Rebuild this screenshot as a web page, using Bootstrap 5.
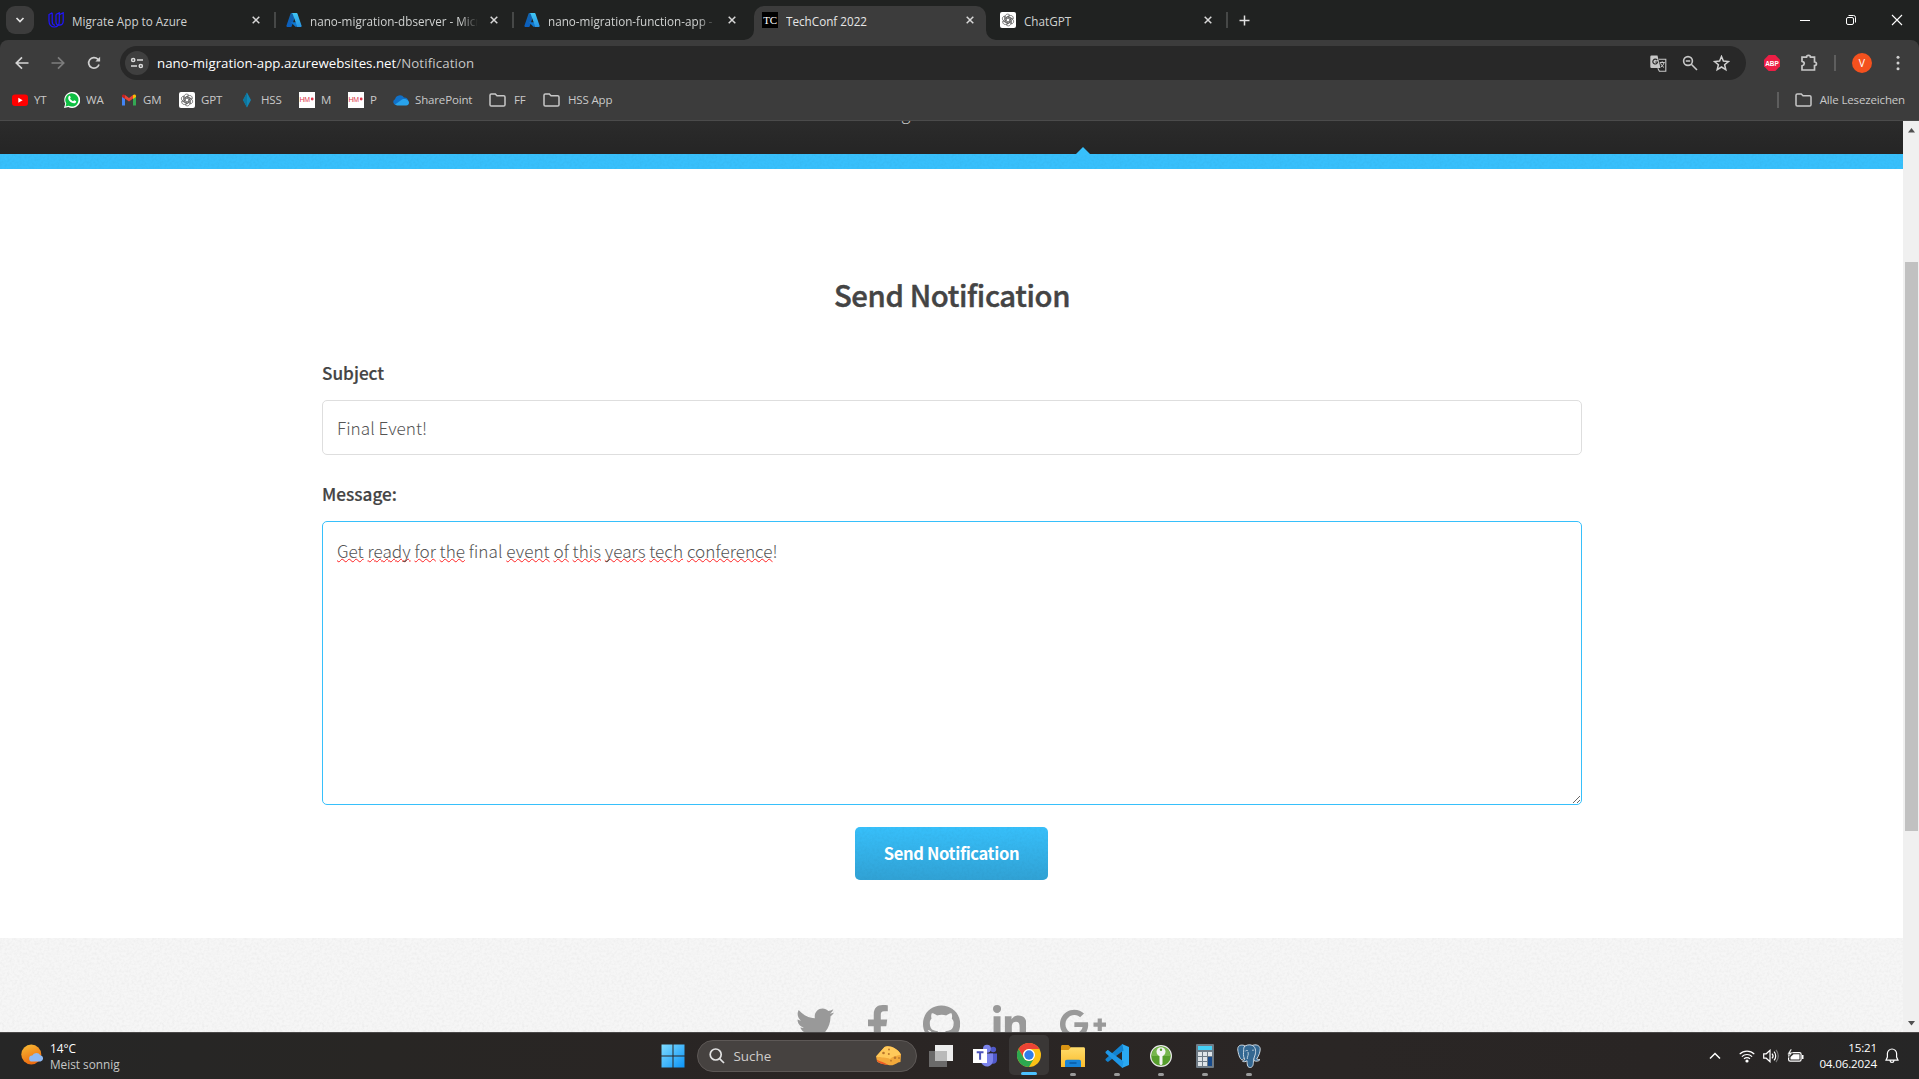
<!DOCTYPE html>
<html lang="de">
<head>
<meta charset="utf-8">
<meta name="viewport" content="width=device-width, initial-scale=1">
<title>TechConf 2022</title>
<link href="https://cdn.jsdelivr.net/npm/bootstrap@5.3.0/dist/css/bootstrap.min.css" rel="stylesheet">
<style>
  html, body { height: 100%; overflow: hidden; }
  body { font-family: "Open Sans", "Noto Sans", sans-serif; font-size: 11.5px; line-height: 16px; color: #e3e3e3; background: #fff; }
  svg { display: block; flex: none; }

  /* browser tabs */
  .tabstrip { height: 40px; background: #202221; padding-left: 6px; }
  .tab-search { width: 28px; height: 28px; border-radius: 9px; background: #3c3c3c; margin: 6px 4px 0 0; }
  .browser-tab { width: 238px; padding: 0 16px 0 10px; height: 40px; color: #d0d2d1; position: relative; }
  .tab-title { width: 170px; margin-left: 8px; padding-top: 1px; overflow: hidden; white-space: nowrap; font-size: 11.7px; }
  .tab-title.fades { -webkit-mask-image: linear-gradient(90deg, #000 150px, transparent 168px); mask-image: linear-gradient(90deg, #000 150px, transparent 168px); }
  .tab-line::after { content: ""; position: absolute; right: 0; top: 12px; width: 2px; height: 16px; background: #464847; }
  .browser-tab.current { color: #e6e6e6; }
  .browser-tab.current::before { content: ""; position: absolute; z-index: 0; left: 2px; right: 4px; top: 6px; bottom: 0; background: #3c3c3c; border-radius: 10px 10px 0 0; }
  .browser-tab.current > * { position: relative; z-index: 1; }
  .tab-foot { position: absolute !important; bottom: 0; }
  .tab-foot.l { left: -8px; } .tab-foot.r { right: -6px; }
  .tc-icon { width: 16px; height: 16px; background: #000; color: #fff; font: 11px/16px "Liberation Serif", serif; letter-spacing: -.3px; text-align: center; }
  .new-tab { margin-left: 11px; }
  .win-buttons { gap: 34px; padding-right: 16px; height: 40px; }

  /* toolbar */
  .toolbar-wrap { background: #202221; }
  .toolbar { height: 46px; background: #3c3c3c; padding: 0 19px 0 14px; border-radius: 8px 8px 0 0; }
  .gap-20 { margin-left: 20px; }
  .omnibox { height: 34px; border-radius: 17px; background: #282828; margin-left: 18px; width: 1626px; padding: 0 16px 0 5px; }
  .gap-15 { margin-left: 15px; }
  .gap-16 { margin-left: 16px; }
  .gap-18 { margin-left: 18px; }
  .site-info { width: 24px; height: 24px; border-radius: 50%; background: #3f3f3f; }
  .address { font-size: 13.25px; line-height: 18px; margin-left: 8px; color: #fff; }
  .address span { color: #c7c7c7; letter-spacing: .12px; }
  .avatar { width: 20px; height: 20px; border-radius: 50%; background: #f4511e; color: #fff; font-size: 10.5px; line-height: 20px; text-align: center; }
  .thin-bar { width: 2px; height: 16px; background: #5e5e5e; }

  /* bookmarks */
  .bookmarks { height: 35px; background: #3c3c3c; border-bottom: 1px solid #4b4b4b; padding: 0 14px 6px 12px; color: #c9c9c9; }
  .bookmark { display: flex; align-items: center; white-space: nowrap; letter-spacing: -.15px; }
  .bookmark svg { margin-right: 6px; }
  .bookmark .folder { margin-right: 8px; }

  /* page */
  .viewport { height: 911px; background: #fff; }
  .site, .site .form-control, .site .btn { font-family: "Noto Sans CJK SC", "Noto Sans CJK JP", sans-serif; }
  .site { width: 1903px; color: #444; }
  .site-header { height: 33px; position: relative; overflow: hidden; background: linear-gradient(#2b2b2b, #252525); }
  .nav-rest { position: absolute; left: 901px; top: -18px; font-size: 17px; line-height: 20px; color: #c0c0c0; font-weight: 300; }
  .nav-notch { position: absolute; left: 1076px; bottom: 0; border: 7px solid transparent; border-top: 0; border-bottom-color: #37c0fb; }
  .grain { background-image: url("data:image/svg+xml,%3Csvg xmlns='http://www.w3.org/2000/svg' width='160' height='160'%3E%3Cfilter id='n'%3E%3CfeTurbulence type='fractalNoise' baseFrequency='.4' numOctaves='2' stitchTiles='stitch'/%3E%3CfeColorMatrix values='0 0 0 0 0 0 0 0 0 0 0 0 0 0 0 .5 0 0 0 -.2'/%3E%3C/filter%3E%3Crect width='160' height='160' filter='url(%23n)' opacity='.13'/%3E%3C/svg%3E"); }
  .blue-bar { height: 15px; background-color: #38c0fc; }
  .panel { height: 769px; width: 1260px; margin-left: 322px; padding-top: 103px; }
  .panel h2 { font-size: 29.3px; line-height: 44px; font-weight: 500; color: #444; text-align: center; margin: 0 0 45px; letter-spacing: -.38px; -webkit-text-stroke: .45px #444; }
  .panel label { display: block; font-size: 17.2px; line-height: 24px; font-weight: 500; color: #444; margin-bottom: 15px; -webkit-text-stroke: .2px #444; }
  .panel .form-control { font-size: 17.2px; line-height: 26px; font-weight: 300; color: #555; border: 1px solid #dedede; border-radius: 5px; padding: 16px 14px 14px; box-shadow: none; }
  .panel .subject { height: 55px; padding: 14px; margin-bottom: 27px; }
  .panel .message { height: 284px; border-color: #37c0fb; overflow: auto; resize: both; }
  .typo { text-decoration: underline wavy #f22 1.200px; text-underline-offset: 0; text-decoration-skip-ink: none; }
  .panel .send { display: block; width: 193px; height: 53px; margin: 22px 0 0 533px; padding: 0; border: 0; border-radius: 5px; color: #fff; font-size: 16.6px; font-weight: 700; letter-spacing: -.38px; background-color: #37c0fb; }
  .send-face { display: flex; height: 100%; align-items: center; justify-content: center; border-radius: 5px; background: linear-gradient(rgba(30,80,110,0), rgba(30,80,110,.27)); }
  .site-footer { height: 94px; background-color: #f6f6f6; padding-top: 67px; overflow: hidden; gap: 33px; fill: #999; }
  .fb { margin: 0 1.5px; }

  .scroll-track { width: 16px; background: #f0f0f0; padding: 7px 1px 6px 2px; }
  .scroll-thumb { height: 569px; margin-top: 129px; width: 13px; background: #c1c1c1; }

  /* taskbar */
  .taskbar { height: 47px; border-top: 1px solid #4a4848; background: linear-gradient(90deg, #262626, #282624 20%, #2a2524 45%, #2a2625 70%, #292524 86%, #262626); position: relative; }
  .weather { position: absolute; left: 21px; top: 7px; line-height: 16px; gap: 7px; font-size: 11.8px; color: #c6c6c6; }
  .weather svg { margin-bottom: 2px; }
  .task-items { position: absolute; left: 650.5px; top: 2px; }
  .task-slot { width: 44px; height: 41px; position: relative; }
  .search-pill { width: 220px; height: 32px; border-radius: 16px; border: 1px solid #5d5856; background: #464240; margin: 0 2px; padding: 0 14px 0 11px; color: #cfcdcb; font-size: 13.4px; gap: 9px; }
  .task-slot.running::after { content: ""; position: absolute; left: 19px; bottom: 0; width: 6px; height: 3px; border-radius: 2px; background: #9a9a9a; }
  .task-slot.active { background: #3a3736; border-radius: 5px; width: 40px; height: 40px; margin: 0 2px 1px; }
  .task-slot.active::after { left: 12px; bottom: 0; width: 16px; background: #4cc2ff; }
  .tray { position: absolute; right: 20px; top: 3px; height: 40px; color: #fff; }
  .clock { font-size: 11.6px; line-height: 16px; text-align: right; width: 67px; white-space: nowrap; letter-spacing: -.15px; margin-left: 6px; }
</style>
</head>
<body>
<svg width="0" height="0" class="position-absolute" aria-hidden="true">
  <defs>
    <linearGradient id="az1" x1="0" y1="0" x2="0" y2="1"><stop offset="0" stop-color="#1463a8"/><stop offset="1" stop-color="#0a5fc0"/></linearGradient>
    <linearGradient id="az2" x1="0" y1="0" x2="0" y2="1"><stop offset="0" stop-color="#40c8f6"/><stop offset="1" stop-color="#2893e2"/></linearGradient>
    <linearGradient id="winlogo" x1="0" y1="0" x2="1" y2="1"><stop offset="0" stop-color="#7fdcff"/><stop offset="1" stop-color="#0b93f6"/></linearGradient>
    <linearGradient id="sun" x1="0" y1="0" x2=".4" y2="1"><stop offset="0" stop-color="#f8be36"/><stop offset="1" stop-color="#ee6c10"/></linearGradient>
    <linearGradient id="folderg" x1="0" y1="0" x2="0" y2="1"><stop offset="0" stop-color="#ffdc6b"/><stop offset="1" stop-color="#fbbc2c"/></linearGradient>
    <symbol id="azure" viewBox="0 0 16 16"><path d="M5.4 1h4.8L5.7 14.2a.9.9 0 0 1-.9.7H1.4a.9.9 0 0 1-.9-1.3L4.5 1.7A1 1 0 0 1 5.4 1z" fill="url(#az1)"/><path d="M12 10.2H5l4.4 4.6h3.5z" fill="#0f78d0"/><path d="M10.6 1H5.8l.8.8 4.4 12.3c.1.4 0 .8-.3.9h4a.9.9 0 0 0 .9-1.3L11.500 1.700A1 1 0 0 0 10.600 1z" fill="url(#az2)"/></symbol>
    <symbol id="closex" viewBox="0 0 8 8"><path d="M.7.7l6.600 6.600M7.300.7L.7 7.300" stroke="#d8d8d8" stroke-width="1.500" fill="none"/></symbol>
    <symbol id="gpt" viewBox="0 0 16 16"><rect width="16" height="16" rx="2" fill="#fff"/><g fill="none" stroke="#4a4a4a" stroke-width=".65"><path id="petal" d="M5.200 9.500V4.800c0-1.700 1.100-2.700 2.500-2.700 1 0 1.700.5 2.100 1.100L6.300 5.200v4.200"/><use href="#petal" transform="rotate(60 8 8)"/><use href="#petal" transform="rotate(120 8 8)"/><use href="#petal" transform="rotate(180 8 8)"/><use href="#petal" transform="rotate(240 8 8)"/><use href="#petal" transform="rotate(300 8 8)"/></g></symbol>
    <symbol id="hm" viewBox="0 0 16 16"><rect width="16" height="16" fill="#fff"/><text x=".5" y="10.200" font-size="6.300" textLength="10.500" lengthAdjust="spacingAndGlyphs" fill="#e0384c" font-family="Liberation Sans, sans-serif">HM</text><circle cx="13.200" cy="7" r="1.400" fill="#e0384c"/></symbol>
    <symbol id="folder" viewBox="0 0 17 14"><path d="M1 2.300C1 1.500 1.500 1 2.300 1h4L8 2.800h6.700c.8 0 1.300.5 1.300 1.300v7.600c0 .8-.5 1.300-1.300 1.300H2.300C1.500 13 1 12.500 1 11.700z" fill="none" stroke="#c7c7c7" stroke-width="1.500"/></symbol>
  </defs>
</svg>

<header>
  <div class="tabstrip d-flex">
    <div class="tab-search d-flex align-items-center justify-content-center"><svg width="10" height="8" viewBox="0 0 10 8"><path d="M1.500 2L5 5.500 8.500 2" fill="none" stroke="#e3e3e3" stroke-width="1.700"/></svg></div>
    <div class="browser-tab tab-line d-flex align-items-center">
      <svg width="16" height="16" viewBox="0 0 16 16"><path d="M4.200.8L1 2.500v6.600c0 3.400 2.100 5.900 5.200 5.900 3 0 5.100-2.100 5.100-5.400M4.200.8v8.800c0 2 1 3.400 2.700 3.700M8 2.500L11.300.8v8.800M8 2.500v7.200c0 2.100 1.200 3.500 3.300 3.500 2.300 0 3.900-1.600 3.900-4.200V.8L11.300 2.800" fill="none" stroke="#2015ff" stroke-width="1.200"/></svg>
      <span class="tab-title">Migrate App to Azure</span><svg class="ms-auto" width="8" height="8"><use href="#closex"/></svg>
    </div>
    <div class="browser-tab tab-line d-flex align-items-center"><svg width="16" height="16"><use href="#azure"/></svg><span class="tab-title fades">nano-migration-dbserver - Micr</span><svg class="ms-auto" width="8" height="8"><use href="#closex"/></svg></div>
    <div class="browser-tab d-flex align-items-center"><svg width="16" height="16"><use href="#azure"/></svg><span class="tab-title fades">nano-migration-function-app -</span><svg class="ms-auto" width="8" height="8"><use href="#closex"/></svg></div>
    <div class="browser-tab current d-flex align-items-center">
      <svg class="tab-foot l" width="10" height="10"><path d="M0 10A10 10 0 0 0 10 0V10z" fill="#3c3c3c"/></svg>
      <div class="tc-icon">TC</div><span class="tab-title">TechConf 2022</span><svg class="ms-auto" width="8" height="8"><use href="#closex"/></svg>
      <svg class="tab-foot r" width="10" height="10"><path d="M10 10A10 10 0 0 1 0 0V10z" fill="#3c3c3c"/></svg>
    </div>
    <div class="browser-tab tab-line d-flex align-items-center"><svg width="16" height="16"><use href="#gpt"/></svg><span class="tab-title">ChatGPT</span><svg class="ms-auto" width="8" height="8"><use href="#closex"/></svg></div>
    <svg class="new-tab align-self-center" width="11" height="11" viewBox="0 0 11 11"><path d="M5.500.5v10M.5 5.500h10" stroke="#e0e0e0" stroke-width="1.500"/></svg>
    <div class="win-buttons d-flex align-items-center ms-auto">
      <svg width="12" height="12" viewBox="0 0 12 12"><path d="M1 6.500h10" stroke="#fff"/></svg>
      <svg width="12" height="12" viewBox="0 0 12 12"><g fill="none" stroke="#fff"><rect x="1.500" y="3.500" width="7" height="7" rx="1.500"/><path d="M3.500 1.500h5a2 2 0 0 1 2 2v5"/></g></svg>
      <svg width="12" height="12" viewBox="0 0 12 12"><path d="M1 1l10 10M11 1L1 11" stroke="#fff" stroke-width="1.100"/></svg>
    </div>
  </div>
  <div class="toolbar-wrap">
    <div class="toolbar d-flex align-items-center">
      <svg width="16" height="16" viewBox="0 0 16 16"><path d="M14.500 8H2.500M8 2.300L2.300 8 8 13.700" fill="none" stroke="#d5d5d5" stroke-width="1.700"/></svg>
      <svg class="gap-20" width="16" height="16" viewBox="0 0 16 16"><path d="M1.500 8h12M8 2.300L13.700 8 8 13.700" fill="none" stroke="#7d7d7d" stroke-width="1.700"/></svg>
      <svg class="gap-20" width="16" height="16" viewBox="0 0 16 16"><path d="M13 9.500A5.300 5.300 0 1 1 11.800 4.200L13.300 5.700" fill="none" stroke="#d0d0d0" stroke-width="1.700"/><path d="M14.100 1.800v4.700H9.400z" fill="#d0d0d0"/></svg>
      <div class="omnibox d-flex align-items-center">
        <div class="site-info d-flex align-items-center justify-content-center"><svg width="14" height="12" viewBox="0 0 14 12"><g fill="none" stroke="#dcdcdc" stroke-width="1.500"><circle cx="3.200" cy="3" r="1.600"/><path d="M7 3h6M1 9h6"/><circle cx="10.800" cy="9" r="1.600"/></g></svg></div>
        <div class="address">nano-migration-app.azurewebsites.net<span>/Notification</span></div>
        <svg class="ms-auto" width="17" height="17" viewBox="0 0 17 17"><path d="M1.500.5h6l3 12.500h-9A1.200 1.200 0 0 1 .3 11.800V1.700A1.200 1.200 0 0 1 1.500.5z" fill="#c7c7c7"/><path d="M7.200 5.200A2.400 2.400 0 1 0 7.600 7H5.300" fill="none" stroke="#282828" stroke-width="1.200"/><path d="M9 4.200h6.800v12H9.400L7.800 13.300" fill="none" stroke="#c7c7c7" stroke-width="1.100"/><path d="M9.800 7.500h5M12.200 6.300v1.200M10.500 8.200c.7 1.900 2 3.300 3.500 4.300M14 7.700c-.5 2-1.600 3.300-3 4.300" fill="none" stroke="#c7c7c7"/></svg>
        <svg class="gap-15" width="16" height="16" viewBox="0 0 16 16"><g fill="none" stroke="#c7c7c7" stroke-width="1.600"><circle cx="6" cy="6" r="4.400"/><path d="M9.300 9.300L15 15M3.800 6h4.400"/></g></svg>
        <svg class="gap-15" width="17" height="17" viewBox="0 0 17 17"><path d="M8.500 1.500l1.900 4.600 5 .4-3.800 3.200 1.200 4.900-4.300-2.600-4.300 2.600 1.200-4.900L1.600 6.500l5-.4z" fill="none" stroke="#d0d0d0" stroke-width="1.500"/></svg>
      </div>
      <svg class="gap-18" width="16" height="16" viewBox="0 0 16 16"><path d="M4.700 0h6.600L16 4.700v6.600L11.300 16H4.700L0 11.300V4.700z" fill="#ed1e45"/><text x="1.200" y="10.800" font-size="7.800" font-weight="700" fill="#fff" textLength="13.600" lengthAdjust="spacingAndGlyphs" font-family="Liberation Sans, sans-serif">ABP</text></svg>
      <svg class="gap-20" width="18" height="18" viewBox="0 0 18 18"><path d="M2 3.200h4.500C6.500.8 10.500.8 10.500 3.200H14.500V8c2.600 0 2.600 3.600 0 3.600V16H2v-4.200C5 11 5 8 2 7.300z" fill="none" stroke="#c7c7c7" stroke-width="1.700"/></svg>
      <div class="thin-bar gap-16"></div>
      <div class="avatar gap-16">V</div>
      <svg class="ms-auto" width="4" height="16" viewBox="0 0 4 16"><g fill="#d0d0d0"><circle cx="2" cy="2.300" r="1.500"/><circle cx="2" cy="8" r="1.500"/><circle cx="2" cy="13.700" r="1.500"/></g></svg>
    </div>
  </div>
  <div class="bookmarks d-flex align-items-center">
    <div class="bookmark" style="width:52px"><svg width="16" height="16" viewBox="0 0 16 16"><rect y="2.500" width="16" height="11.500" rx="3" fill="#f00"/><path d="M6.300 5.700v5l4.300-2.500z" fill="#fff"/></svg>YT</div>
    <div class="bookmark" style="width:57px"><svg width="16" height="16" viewBox="0 0 16 16"><path d="M0 16l1.200-4.300A8 8 0 1 1 4.300 14.900z" fill="#fff"/><path d="M1.500 14.500l.8-3A6.600 6.600 0 1 1 4.600 13.700z" fill="#0fbf43"/><path d="M4.900 4c.8-.8 1.300-.2 1.800 1.300.1.500-.6 1-.6 1.300.7 1.300 1.600 2.100 2.900 2.600.5 0 .9-1 1.300-.9 1.500.6 2.100 1 1.800 1.700-.6 1.700-2.500 1.700-4.700.6C5 9.300 3.200 6.500 4.900 4z" fill="#fff"/></svg>WA</div>
    <div class="bookmark" style="width:58px"><svg width="16" height="16" viewBox="0 0 16 16"><path d="M1 13.500h3V6L1 3.800z" fill="#4285f4"/><path d="M12 13.500h3V3.800L12 6z" fill="#34a853"/><path d="M4 6.500V3l4 3 4-3v3.500l-4 3z" fill="#ea4335"/><path d="M1 5V4c0-1.700 1.700-2.100 3-1v4z" fill="#c5221f"/><path d="M15 5V4c0-1.700-1.700-2.100-3-1v4z" fill="#fbbc04"/></svg>GM</div>
    <div class="bookmark" style="width:60px"><svg width="16" height="16"><use href="#gpt"/></svg>GPT</div>
    <div class="bookmark" style="width:60px"><svg width="16" height="16" viewBox="0 0 16 16"><path d="M8 .5L12 8 8 15.500 4 8z" fill="#1387b5"/><path d="M8 .5V15.500L4 8z" fill="#0c779f"/></svg>HSS</div>
    <div class="bookmark" style="width:49px"><svg width="16" height="16"><use href="#hm"/></svg>M</div>
    <div class="bookmark" style="width:45px"><svg width="16" height="16"><use href="#hm"/></svg>P</div>
    <div class="bookmark" style="width:96px"><svg width="16" height="16" viewBox="0 0 16 16"><path d="M3 13a3 3 0 0 1-1-5.700A5 5 0 0 1 11 5.400 4 4 0 0 1 13 13z" fill="#1071c8"/><path d="M2 12.500L9 7.500c3-1.500 7 .6 7 3.200 0 1.600-1.200 2.800-2.800 2.800H4z" fill="#28a3ec"/></svg>SharePoint</div>
    <div class="bookmark" style="width:54px"><svg class="folder" width="17" height="14"><use href="#folder"/></svg>FF</div>
    <div class="bookmark"><svg class="folder" width="17" height="14"><use href="#folder"/></svg>HSS App</div>
    <div class="thin-bar ms-auto"></div>
    <div class="bookmark gap-16"><svg class="folder" width="17" height="14"><use href="#folder"/></svg>Alle Lesezeichen</div>
  </div>
</header>

<main class="viewport d-flex">
  <div class="site">
    <div class="site-header"><span class="nav-rest">g</span><span class="nav-notch"></span></div>
    <div class="blue-bar grain"></div>
    <section class="panel">
      <h2>Send Notification</h2>
      <label for="subject">Subject</label>
      <input id="subject" class="form-control subject" type="text" value="Final Event!" spellcheck="false">
      <label id="msg">Message:</label>
      <div class="form-control message" role="textbox" aria-labelledby="msg"><span class="typo">Get</span> <span class="typo">ready</span> <span class="typo">for</span> <span class="typo">the</span> final <span class="typo">event</span> <span class="typo">of</span> <span class="typo">this</span> <span class="typo">years</span> <span class="typo">tech</span> <span class="typo">conference</span>!</div>
      <button class="btn send grain" type="button"><span class="send-face">Send Notification</span></button>
    </section>
    <footer class="site-footer grain d-flex justify-content-center align-items-start">
      <svg width="38.400" height="38.400" viewBox="0 0 512 512"><path d="M459.370 151.716c.325 4.548.325 9.097.325 13.645 0 138.720-105.583 298.558-298.558 298.558-59.452 0-114.680-17.219-161.137-47.106 8.447.974 16.568 1.299 25.340 1.299 49.055 0 94.213-16.568 130.274-44.832-46.132-.975-84.792-31.188-98.112-72.772 6.498.974 12.995 1.624 19.818 1.624 9.421 0 18.843-1.300 27.614-3.573-48.081-9.747-84.143-51.980-84.143-102.985v-1.299c13.969 7.797 30.214 12.670 47.431 13.319-28.264-18.843-46.781-51.005-46.781-87.391 0-19.492 5.197-37.360 14.294-52.954 51.655 63.675 129.300 105.258 216.365 109.807-1.624-7.797-2.599-15.918-2.599-24.040 0-57.828 46.782-104.934 104.934-104.934 30.213 0 57.502 12.670 76.670 33.137 23.715-4.548 46.456-13.320 66.599-25.340-7.798 24.366-24.366 44.833-46.132 57.827 21.117-2.273 41.584-8.122 60.426-16.243-14.292 20.791-32.161 39.308-52.628 54.253z"/></svg>
      <svg class="fb" width="19.800" height="38.400" viewBox="0 0 264 512"><path d="M76.700 512V283H0v-91h76.700v-71.700C76.700 42.400 124.300 0 193.800 0c33.300 0 61.900 2.500 70.200 3.600V85h-48.200c-37.800 0-45.100 18-45.100 44.300V192H256l-11.700 91h-73.600v229"/></svg>
      <svg width="37.200" height="38.400" viewBox="0 0 496 512"><path d="M244.800 8C106.100 8 0 113.300 0 252c0 110.900 69.800 205.800 169.500 239.200 12.800 2.300 17.300-5.600 17.300-12.100 0-6.200-.3-40.400-.3-61.400 0 0-70 15-84.700-29.800 0 0-11.400-29.100-27.800-36.600 0 0-22.900-15.700 1.600-15.400 0 0 24.900 2 38.600 25.800 21.900 38.600 58.600 27.500 72.900 20.900 2.300-16 8.800-27.100 16-33.700-55.900-6.200-112.300-14.300-112.300-110.500 0-27.500 7.600-41.300 23.600-58.900-2.600-6.500-11.100-33.300 2.600-67.900 20.900-6.500 69 27 69 27 20-5.600 41.500-8.500 62.800-8.500s42.800 2.900 62.800 8.500c0 0 48.100-33.600 69-27 13.700 34.700 5.200 61.400 2.600 67.900 16 17.700 25.800 31.500 25.800 58.900 0 96.500-58.900 104.200-114.800 110.500 9.200 7.900 17 22.900 17 46.400 0 33.700-.3 75.400-.3 83.600 0 6.500 4.600 14.400 17.300 12.100C428.200 457.800 496 362.900 496 252 496 113.300 383.500 8 244.800 8z"/></svg>
      <svg width="33.600" height="38.400" viewBox="0 0 448 512"><path d="M100.280 448H7.400V148.900h92.880zM53.790 108.100C24.090 108.100 0 83.500 0 53.800a53.790 53.790 0 0 1 107.580 0c0 29.700-24.100 54.300-53.790 54.300zM447.900 448h-92.680V302.400c0-34.700-.7-79.200-48.290-79.200-48.290 0-55.690 37.700-55.690 76.700V448h-92.780V148.900h89.080v40.800h1.300c12.400-23.500 42.690-48.300 87.880-48.300 94 0 111.280 61.900 111.280 142.300V448z"/></svg>
      <svg width="48" height="38.400" viewBox="0 0 640 512"><path d="M386.061 228.496c1.834 9.692 3.143 19.384 3.143 31.956C389.204 370.205 315.599 448 204.800 448c-106.084 0-192-85.915-192-192s85.916-192 192-192c51.864 0 95.083 18.859 128.611 50.292l-52.126 50.030c-14.145-13.621-39.028-29.599-76.485-29.599-65.484 0-118.920 54.221-118.920 121.277 0 67.056 53.436 121.277 118.920 121.277 75.961 0 104.513-54.745 108.965-82.773H204.800v-66.009h181.261zm185.406 6.437V179.200h-56.001v55.733h-55.733v56.001h55.733v55.733h56.001v-55.733H627.200v-56.001h-55.733z"/></svg>
    </footer>
  </div>
  <div class="scroll-track d-flex flex-column align-items-center">
    <svg width="7" height="5" viewBox="0 0 7 5"><path d="M3.500 0L7 4.500H0z" fill="#505050"/></svg>
    <div class="scroll-thumb"></div>
    <svg class="mt-auto" width="7" height="5" viewBox="0 0 7 5"><path d="M3.500 4.500L7 0H0z" fill="#505050"/></svg>
  </div>
</main>

<footer class="taskbar">
  <div class="weather d-flex align-items-center">
    <svg width="22" height="22" viewBox="0 0 22 22"><circle cx="10.300" cy="10.500" r="10" fill="url(#sun)"/><path d="M11 17.500a3 3 0 0 1 .3-6 4.500 4.500 0 0 1 8-.3 3.200 3.200 0 0 1 .2 6.300z" fill="#8fbaf5"/></svg>
    <div><div class="text-white">14°C</div><div>Meist sonnig</div></div>
  </div>
  <div class="task-items d-flex align-items-center">
    <div class="task-slot d-flex align-items-center justify-content-center"><svg width="24" height="24" viewBox="0 0 24 24"><path d="M.5.5h11v11H.5zM12.500.5h11v11h-11zM.5 12.500h11v11H.5zM12.500 12.500h11v11h-11z" fill="url(#winlogo)"/></svg></div>
    <div class="search-pill d-flex align-items-center">
      <svg width="16" height="16" viewBox="0 0 16 16"><g fill="none" stroke="#e2e2e2" stroke-width="1.700"><circle cx="6.700" cy="6.500" r="5.500"/><path d="M10.600 10.600L15 15"/></g></svg>
      <span>Suche</span>
      <svg class="ms-auto" width="27" height="22" viewBox="0 0 27 22"><path d="M1 11.500L9.500 2c4-2.500 13 1 16.500 7.500L25.500 17c-4 .2-5.500 4-11 3.200C9 19 4 18.500 2.200 16.500z" fill="#f2a93b"/><path d="M1 11.500L9.500 2c4-2.500 13 1 16.500 7.500-4 1.500-7 1-11 4.500-4-2.200-8-.6-14-2.500z" fill="#ffc95a"/><path d="M1.500 14.500c4 2.300 8 2.800 11.500 5.500-5-.6-9-1.500-11-4z" fill="#ee5a24"/><g fill="#b9762c"><circle cx="8.500" cy="8" r="1.300"/><circle cx="14" cy="4.500" r="1"/><circle cx="13.800" cy="9" r="1"/><circle cx="20" cy="12.700" r="1.300"/><circle cx="16" cy="15.700" r=".9"/><circle cx="24" cy="13" r=".9"/></g></svg>
    </div>
    <div class="task-slot d-flex align-items-center justify-content-center"><svg width="24" height="22" viewBox="0 0 24 22"><path d="M6 0h18v16H6z" fill="#ededed"/><path d="M0 6h18v16H0z" fill="#777" opacity=".85"/><path d="M6 6h12v10H6z" fill="#b9b9b9"/></svg></div>
    <div class="task-slot d-flex align-items-center justify-content-center"><svg width="24" height="24" viewBox="0 0 24 24"><circle cx="20.300" cy="5.500" r="2.800" fill="#5059c9"/><path d="M17 9.500h7v6.500c0 4-5 5-7 2z" fill="#5059c9"/><circle cx="14" cy="4.800" r="4" fill="#7b83eb"/><path d="M8 9.500h12V16c0 8-10 8.500-12 2z" fill="#7b83eb"/><rect y="5" width="14" height="14" fill="#fff"/><path d="M3.700 8.300h6.800M7.100 8.300v7.500" stroke="#4b53bc" stroke-width="2"/></svg></div>
    <div class="task-slot running active d-flex align-items-center justify-content-center"><svg width="24" height="24" viewBox="0 0 24 24"><circle cx="12" cy="12" r="12" fill="#fbc116"/><path d="M1.600 6A12 12 0 0 1 22.400 6H12a6 6 0 0 0-5.200 9z" fill="#ea4335"/><path d="M1.600 6A12 12 0 0 0 12 24L17.200 15A6 6 0 0 1 6.800 15z" fill="#2da94f"/><circle cx="12" cy="12" r="6" fill="#fff"/><circle cx="12" cy="12" r="4.700" fill="#2f7de9"/></svg></div>
    <div class="task-slot running d-flex align-items-center justify-content-center"><svg width="24" height="22" viewBox="0 0 24 22"><path d="M0 1.500C0 .6.600 0 1.500 0h6L10 2.500V9H0z" fill="#d99414"/><path d="M0 5h7.500L10 2.200h12.500c.9 0 1.500.6 1.500 1.500V22H0z" fill="url(#folderg)"/><path d="M4 22v-5.500c0-1 .8-1.800 1.800-1.800h12.400c1 0 1.800.8 1.800 1.800V22z" fill="#1683d8"/><path d="M8.500 18h7" stroke="#0b5ca8" stroke-width="1.600"/></svg></div>
    <div class="task-slot running d-flex align-items-center justify-content-center"><svg width="24" height="24" viewBox="0 0 24 24"><path d="M17 0L24 3V21L17 24z" fill="#2aa9f2"/><path d="M17.300 0L.8 14.800c-.5.500-.5 1.100 0 1.600l1.300 1.200c.5.400 1 .4 1.500 0L18.500 6.500z" fill="#1282cf"/><path d="M17.300 24L.8 9.200c-.5-.5-.5-1.100 0-1.600l1.300-1.200c.5-.4 1-.4 1.500 0L18.500 17.500z" fill="#1f97e6"/></svg></div>
    <div class="task-slot running d-flex align-items-center justify-content-center"><svg width="22" height="22" viewBox="0 0 22 22"><circle cx="11" cy="11" r="10.400" fill="#569e2c" stroke="#e8e8e8" stroke-width="1.200"/><path d="M1.600 11a9.400 9.400 0 0 1 18.800 0z" fill="#77b64e"/><circle cx="11" cy="6.700" r="4.500" fill="#f4f4f4"/><path d="M9.500 10h3v9L11 20.500 9.500 19z" fill="#f4f4f4"/><circle cx="11" cy="4.700" r="1.200" fill="#569e2c"/></svg></div>
    <div class="task-slot running d-flex align-items-center justify-content-center"><svg width="18" height="24" viewBox="0 0 18 24"><rect width="18" height="24" rx="1" fill="#6f7b86"/><rect x="2" y="2" width="14" height="4" fill="#45d0f5"/><path d="M2 8h4v4H2zM7 8h4v4H7zM12 8h4v4h-4zM2 13h4v4H2zM7 13h4v4H7zM2 18h4v4H2zM7 18h4v4H7z" fill="#dfe4e8"/><path d="M12 13h4v9h-4z" fill="#174a8b"/></svg></div>
    <div class="task-slot running d-flex align-items-center justify-content-center"><svg width="24" height="24" viewBox="0 0 24 24"><g fill="#336791" stroke="#dbe4ec" stroke-width=".9" stroke-linejoin="round"><path d="M7.500 1.500C3 .2.300 2 .8 6c.4 3.500 2 9 4 9.800 1 .3 2-1 3-2.300z"/><path d="M15 1.500c4-1.500 7.500-.3 8.200 3 .3 3-1.500 7.500-3.500 10.500 1 .8 2.500.3 3.300.6-1 1.800-4.500 2-6 1z"/><path d="M8 2c3-1.800 7-1.500 9 .5 2.300 3 1.700 7 .7 9.500l-1.200 3.500c-.2 3.500.2 7.500-3 8-3 .2-3.300-2-3.500-6.800-1 1.200-3.500 1.300-4.500.5 1.500-.8 2.200-.8 2-2.200C6 12 6.500 9 6.700 7 6.600 5 6.500 3 8 2z"/></g><path d="M8.500 7c1-.8 1.800-.7 2.500 0M15 6.500c.8-.5 1.500-.5 2 0M11 8c1 3-1 4.500-.7 7" fill="none" stroke="#dbe4ec" stroke-width=".8"/></svg></div>
  </div>
  <div class="tray d-flex align-items-center">
    <svg width="12" height="8" viewBox="0 0 12 8"><path d="M1 6.500L6 1.500l5 5" fill="none" stroke="#fff" stroke-width="1.500"/></svg>
    <svg class="gap-18" width="16" height="14" viewBox="0 0 16 14"><g fill="none" stroke="#fff" stroke-width="1.200"><path d="M.7 5.200a10.300 10.300 0 0 1 14.600 0M2.900 7.600a7.200 7.200 0 0 1 10.200 0M5 9.800a4.200 4.200 0 0 1 6 0"/></g><circle cx="8" cy="12" r="1.600" fill="#fff"/></svg>
    <svg class="ms-2" width="16" height="14" viewBox="0 0 16 14"><g fill="none" stroke="#fff" stroke-width="1.200"><path d="M.7 4.800h2.500L7 1.300v11.400L3.200 9.200H.7z"/><path d="M9 4.600a3.500 3.500 0 0 1 0 4.800M11 2.700a6.200 6.200 0 0 1 0 8.600"/><path d="M13 1a9 9 0 0 1 0 12" stroke="#777"/></g></svg>
    <svg class="ms-2" width="17" height="14" viewBox="0 0 17 14"><rect x="1.600" y="3.600" width="12.500" height="8.500" rx="1.600" fill="none" stroke="#fff" stroke-width="1.200"/><path d="M3.500 10.500V8L6.500 5.200h6v5.300z" fill="#fff"/><path d="M15 6h1.500v4H15z" fill="#fff"/><path d="M3.500 0L.3 5.200h2L1.500 8.500 5.500 3.700H3.300L5 0z" fill="#fff" stroke="#272625" stroke-width=".5"/></svg>
    <div class="clock"><div>15:21</div><div>04.06.2024</div></div>
    <svg class="ms-2" width="14" height="16" viewBox="0 0 14 16"><path d="M7 1a4.600 4.600 0 0 0-4.600 4.600V9L1 12.200h12L11.600 9V5.600A4.600 4.600 0 0 0 7 1zM5 12.500c.2 2.600 3.800 2.600 4 0" fill="none" stroke="#fff" stroke-width="1.200"/></svg>
  </div>
</footer>
<script src="https://cdn.jsdelivr.net/npm/bootstrap@5.3.0/dist/js/bootstrap.bundle.min.js"></script>
</body>
</html>
